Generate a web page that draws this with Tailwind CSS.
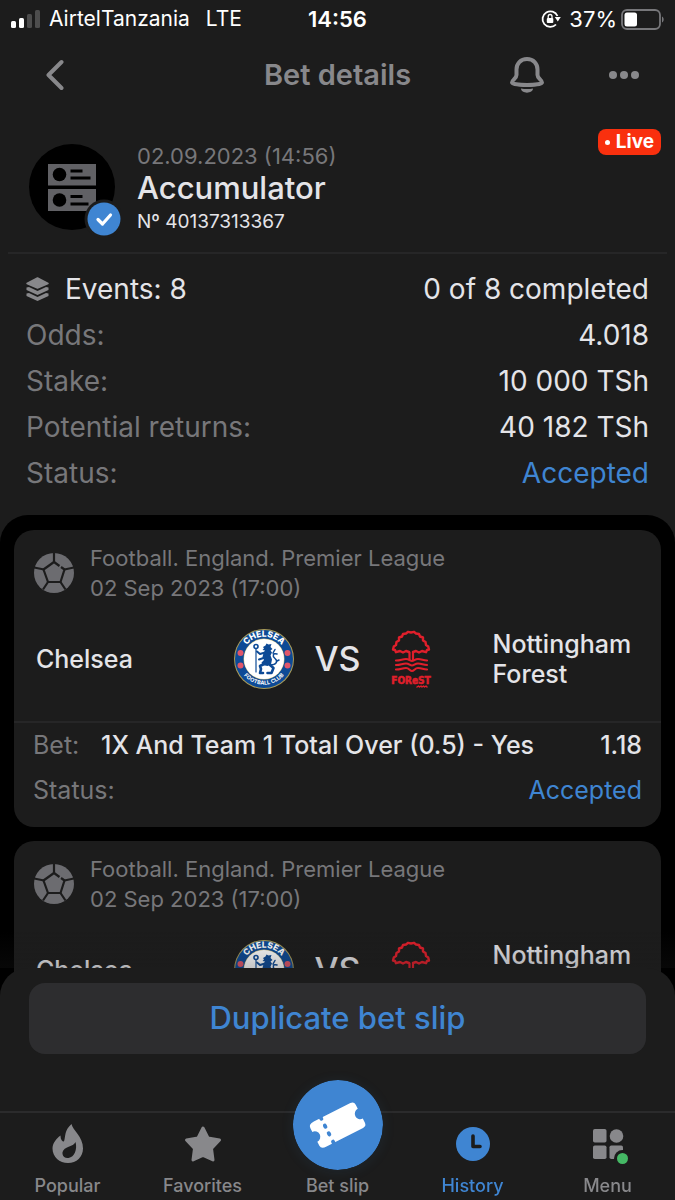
<!DOCTYPE html>
<html lang="en">
<head>
    <meta charset="UTF-8">
    <meta name="viewport" content="width=device-width, initial-scale=1.0">
    <title>Bet details</title>
    <script src="https://cdn.jsdelivr.net/npm/@tailwindcss/browser@4"></script>
</head>
<body class="min-h-screen bg-[#1c1c1c] font-['Inter',sans-serif] text-[#e4e4e8]">

    <!-- Shared icons -->
    <svg class="hidden" aria-hidden="true">
        <symbol id="football" viewBox="0 0 40 40">
            <circle cx="20" cy="20" r="20" fill="#6c6c70"/>
            <g fill="none" stroke="#1c1c1c" stroke-width="2.2" stroke-linejoin="round">
                <path d="M25.500 13L20 9 9.500 16.500 14 29h12.500l4-12.500-3.500-2.500"/>
                <path d="M20 0v9M0 14.500l10 2M40 14.500l-9.500 2M14 29l-5 7.500M26.500 29l5 7.500"/>
            </g>
        </symbol>
        <symbol id="chelsea" viewBox="0 0 60 60">
            <circle cx="30" cy="30" r="30" fill="#a99c5a"/>
            <circle cx="30" cy="30" r="29" fill="#0d4a96"/>
            <circle cx="30" cy="30" r="20.500" fill="#c9bd7c"/>
            <circle cx="30" cy="30" r="20" fill="#fff"/>
            <g fill="#e0566a">
                <circle cx="6.500" cy="24" r="3"/><circle cx="6.500" cy="36.500" r="3"/>
                <circle cx="53.500" cy="24" r="3"/><circle cx="53.500" cy="36.500" r="3"/>
            </g>
            <path id="arc-top" d="M8.500 25A22 22 0 0 1 51.500 25" fill="none"/>
            <path id="arc-bottom" d="M5 38A26.500 26.500 0 0 0 55 38" fill="none"/>
            <text fill="#fff" font-family="Inter, sans-serif" font-size="8.500" font-weight="800" text-anchor="middle"><textPath href="#arc-top" startOffset="50%">CHELSEA</textPath></text>
            <text fill="#fff" font-family="Inter, sans-serif" font-size="5.500" font-weight="700" text-anchor="middle"><textPath href="#arc-bottom" startOffset="50%">FOOTBALL CLUB</textPath></text>
            <g fill="none" stroke="#0d4a96" stroke-linecap="round" stroke-linejoin="round">
                <circle cx="22" cy="17.500" r="2" stroke-width="1.600"/>
                <path d="M22 20v23" stroke-width="1.200"/>
                <path d="M31 23.500l-5 1.500-3-2.500M31 28.500l-6 2" stroke-width="2"/>
                <path d="M30 35l-4 2 1 3-1 4h3M36 36l3.500 3-2 5h-4" stroke-width="2.600"/>
                <path d="M36 36c7 0 8-4 5-6.500s-2-6 2-4.500M39 24l2-3.500M43 32l2-1" stroke-width="1.500"/>
            </g>
            <path d="M29 18l2.500-1.500 1-2 2 1 3-.5-1 3 2 2-2 1.500 1.500 2-1.500 3 1.500 4-1 5-3.500 1.500-5-1-1-2.500 2.500-2.500-1.500-3 1-4 1.500-2.500-2.500-.5 1.500-1.500z" fill="#0d4a96"/>
        </symbol>
        <symbol id="forest" viewBox="-10 0 60 60">
            <g fill="none" stroke="#e01f2b" stroke-width="2.400" stroke-linecap="round" stroke-linejoin="round">
                <path d="M18 23l-3-1-3 1.500-3-1.500-4 1.200-1-2.200-2-.5.800-3 2.200-1.500.5-3 2.500-1.500 0-3 3-1 1-2.500 3-.5 2-1.700 3 .7 3-.7 2 1.700 3 .5 1 2.500 3 1 0 3 2.500 1.500.5 3 2.200 1.500.8 3-2 .5-1 2.200-4-1.200-3 1.500-3-1.500-3 1"/>
                <path d="M18.500 23.500v7M22 23.500v7" stroke-width="2.200"/>
                <path d="M5 31.500c5 0 6-1.500 10-1.500 3 0 4 2 6 2s3-2 6-2c4 0 5 1.500 9 1.500M5 36c5 0 6-1.500 10-1.500 3 0 4 2 6 2s3-2 6-2c4 0 5 1.500 9 1.500M5 40.500c5 0 6-1.500 10-1.500 3 0 4 3 6 3s3-3 6-3c4 0 5 1.500 9 1.500" stroke-width="2.200"/>
                <path d="M26 58l1.500-1 1 1 1.500-1 1 1 1.500-1 1 1 1.500-1 1 1" stroke-width="1.500"/>
            </g>
            <text x="20" y="55" fill="#e01f2b" stroke="#e01f2b" stroke-width=".5" font-family="Liberation Sans Narrow, DejaVu Sans Condensed, sans-serif" font-size="10" font-weight="700" text-anchor="middle">FOReST</text>
        </symbol>
    </svg>

    <!-- Status bar -->
    <div class="grid h-[38px] grid-cols-[1fr_auto_1fr] items-center px-[11px] text-[21px] text-white">
        <div class="flex items-center">
            <svg class="mr-2 h-5 w-[30px]" viewBox="0 0 30 20">
                <g fill="#fff"><rect y="12" width="5" height="7" rx="1.500"/><rect x="8" y="9" width="5" height="10" rx="1.500"/></g>
                <g fill="#4d4d4d"><rect x="16" y="5" width="5" height="14" rx="1.500"/><rect x="24" y="1" width="5" height="18" rx="1.500"/></g>
            </svg>
            <span class="mr-4">AirtelTanzania</span>
            <span>LTE</span>
        </div>
        <div class="text-[22px] font-semibold">14:56</div>
        <div class="flex items-center justify-end">
            <svg class="mr-2 size-5" viewBox="0 0 20 20">
                <path d="M16.500 7A7.800 7.800 0 1 0 15 15.500" fill="none" stroke="#fff" stroke-width="1.800"/>
                <path d="M13.800 8h6l-3 4.500z" fill="#fff"/>
                <rect x="5.800" y="9" width="6.500" height="5" rx="1" fill="#fff"/>
                <path d="M7.200 9V7.400a1.900 1.900 0 0 1 3.800 0V9" fill="none" stroke="#fff" stroke-width="1.300"/>
            </svg>
            <span class="mr-1 text-[22px]">37%</span>
            <svg class="h-[22px] w-[43px]" viewBox="0 0 43 22">
                <rect x="1" y="2" width="38" height="19" rx="5" fill="none" stroke="#77777a" stroke-width="1.800"/>
                <rect x="3.500" y="4.500" width="12.500" height="14" rx="2.500" fill="#fff"/>
                <path d="M41 8.500c2.200 1 2.200 5 0 6z" fill="#77777a"/>
            </svg>
        </div>
    </div>

    <!-- Page header -->
    <header class="grid h-[74px] grid-cols-[1fr_auto_1fr] items-center px-9">
        <button type="button" aria-label="Back" class="justify-self-start px-[10px]">
            <svg class="h-8 w-[18px]" viewBox="0 0 18 32"><path d="M15.500 3L2.500 16l13 13" fill="none" stroke="#88888b" stroke-width="4" stroke-linecap="round" stroke-linejoin="round"/></svg>
        </button>
        <h1 class="text-[29px] font-semibold text-[#88888b]">Bet details</h1>
        <div class="flex items-center justify-end gap-[65px]">
            <button type="button" aria-label="Notifications">
                <svg class="h-9 w-[34px]" viewBox="0 0 34 36">
                    <path d="M17 2C10.500 2 6.500 6.800 6.500 12.500v5.500c0 3.500-4.500 5-4.500 7.500 0 1.500 6.500 2.500 15 2.500s15-1 15-2.500c0-2.500-4.500-4-4.500-7.500v-5.500C27.500 6.800 23.500 2 17 2z" fill="none" stroke="#88888b" stroke-width="4" stroke-linejoin="round"/>
                    <path d="M11 31.500q6 1.200 12 0c0 5.500-12 5.500-12 0z" fill="#88888b"/>
                </svg>
            </button>
            <button type="button" aria-label="More">
                <svg class="h-9 w-[30px]" viewBox="0 0 30 36" fill="#88888b"><circle cx="4" cy="18" r="4"/><circle cx="15" cy="18" r="4"/><circle cx="26" cy="18" r="4"/></svg>
            </button>
        </div>
    </header>

    <main>
        <!-- Bet type -->
        <section class="relative mx-2 flex h-[142px] items-start gap-4 border-b-2 border-[#262627] pt-8 pl-[21px]">
            <svg class="h-[94px] w-[92px] shrink-0" viewBox="0 0 92 94">
                <circle cx="43" cy="43" r="43" fill="#000"/>
                <path d="M19 20h48v21.500H19zM19 45h48v22H19z" fill="#616165"/>
                <g fill="#000"><circle cx="30.500" cy="30.500" r="6.800"/><circle cx="30.500" cy="56" r="6.800"/></g>
                <path d="M41.500 27h12M41.500 34h20M41.500 52.500h12M41.500 60h18" stroke="#000" stroke-width="2.800"/>
                <circle cx="75" cy="75" r="19.500" fill="#1c1c1c"/>
                <circle cx="75" cy="75" r="16.500" fill="#3f85d2"/>
                <path d="M69 75.500l4.500 4.500 8-9" fill="none" stroke="#fff" stroke-width="3.200" stroke-linecap="round" stroke-linejoin="round"/>
            </svg>
            <div>
                <p class="text-[22px] leading-[24px] text-[#77777a]">02.09.2023 (14:56)</p>
                <h2 class="text-[31px] leading-[40px] font-medium">Accumulator</h2>
                <p class="text-[19px] leading-[28px]">Nº 40137313367</p>
            </div>
            <span class="absolute top-[17px] right-[6px] flex h-[26px] items-center gap-[6px] rounded-lg bg-[#f9300e] px-[7px] text-[19px] font-bold text-white">
                <span class="size-[5px] rounded-full bg-white"></span>Live
            </span>
        </section>

        <!-- Summary -->
        <dl class="px-[26px] pt-3 pb-[19px] text-[28px] leading-[46px] text-[#77777a]">
            <div class="flex justify-between">
                <dt class="flex items-center gap-4 text-[#e4e4e8]">
                    <svg class="h-6 w-[23px]" viewBox="0 0 23 24" fill="#88888b">
                        <path d="M11.500 1L22 6.500 11.500 11 1 6.500z" stroke="#88888b" stroke-width="1.500" stroke-linejoin="round"/>
                        <path d="M.5 10.500l2.500-.5 8.500 4 8.500-4 2.500.5v2.500L11.500 18 .5 13zM.5 16.500L3 16l8.500 4 8.500-4 2.500.5V19l-11 5-11-5z"/>
                    </svg>
                    Events: 8
                </dt>
                <dd class="text-[#e4e4e8]">0 of 8 completed</dd>
            </div>
            <div class="flex justify-between"><dt>Odds:</dt><dd class="text-[#e4e4e8]">4.018</dd></div>
            <div class="flex justify-between"><dt>Stake:</dt><dd class="text-[#e4e4e8]">10 000 TSh</dd></div>
            <div class="flex justify-between"><dt>Potential returns:</dt><dd class="text-[#e4e4e8]">40 182 TSh</dd></div>
            <div class="flex justify-between"><dt>Status:</dt><dd class="text-[#3f85d2]">Accepted</dd></div>
        </dl>

        <!-- Events -->
        <section class="flex flex-col gap-[14px] rounded-t-[28px] bg-black px-[14px] pt-[15px] pb-[14px]">
            <article class="rounded-[20px] bg-[#1c1c1c] pt-[13px] pb-[14px]">
                <div class="flex items-center gap-4 px-5 text-[22px] leading-[30px] text-[#77777a]">
                    <svg class="size-10"><use href="#football"/></svg>
                    <p>Football. England. Premier League<br>02 Sep 2023 (17:00)</p>
                </div>
                <div class="mt-[26px] mb-8 grid h-[60px] grid-cols-[1fr_auto_1fr] items-center px-[22px] text-[25px] leading-[30px] font-medium">
                    <p>Chelsea</p>
                    <div class="flex items-center gap-5">
                        <svg class="size-[60px]"><use href="#chelsea"/></svg>
                        <span class="text-[34px] font-medium">VS</span>
                        <svg class="size-[60px]"><use href="#forest"/></svg>
                    </div>
                    <p class="pl-[52px]">Nottingham Forest</p>
                </div>
                <div class="border-t-2 border-[#262627] px-[19px] text-[25px] leading-[45px]">
                    <div class="flex">
                        <span class="w-[68px] text-[#77777a]">Bet:</span>
                        <span class="flex-1 font-medium">1X And Team 1 Total Over (0.5) - Yes</span>
                        <span class="font-medium">1.18</span>
                    </div>
                    <div class="flex justify-between"><span class="text-[#77777a]">Status:</span><span class="text-[#3f85d2]">Accepted</span></div>
                </div>
            </article>
            <article class="rounded-t-[20px] bg-[#1c1c1c] pt-[13px]">
                <div class="flex items-center gap-4 px-5 text-[22px] leading-[30px] text-[#77777a]">
                    <svg class="size-10"><use href="#football"/></svg>
                    <p>Football. England. Premier League<br>02 Sep 2023 (17:00)</p>
                </div>
                <div class="mt-[26px] mb-8 grid h-[60px] grid-cols-[1fr_auto_1fr] items-center px-[22px] text-[25px] leading-[30px] font-medium">
                    <p>Chelsea</p>
                    <div class="flex items-center gap-5">
                        <svg class="size-[60px]"><use href="#chelsea"/></svg>
                        <span class="text-[34px] font-medium">VS</span>
                        <svg class="size-[60px]"><use href="#forest"/></svg>
                    </div>
                    <p class="pl-[52px]">Nottingham Forest</p>
                </div>
            </article>
        </section>
    </main>

    <!-- Bottom panel -->
    <footer class="fixed inset-x-0 bottom-0">
        <div class="h-9 bg-linear-to-b from-[#1c1c1c]/0 to-[#1c1c1c]/25"></div>
        <div class="rounded-t-[28px] bg-[#1c1c1c] pt-[15px]">
            <div class="px-[29px]">
                <button type="button" class="h-[71px] w-full rounded-2xl bg-[#2d2d2f] text-[31px] font-medium text-[#3f85d2]">Duplicate bet slip</button>
            </div>
            <nav class="mt-[57px] grid h-[89px] grid-cols-5 border-t-2 border-[#2b2b2c] text-center text-lg leading-6 font-medium text-[#88888b]">
                <a href="#" class="flex flex-col items-center justify-end gap-[10px] pb-[2px]">
                    <svg class="h-10 w-8" viewBox="0 0 32 40" fill="#88888b">
                        <path fill-rule="evenodd" d="M19.500 0c1 6 11.500 12.500 11.500 24.500C31 33 24.500 39 16 39S.5 33 .5 24.500C.5 19.500 4 15 8.500 11.500c0 4 1.500 6 3.500 6C14 11 12 7 19.500 0zM23.500 18c-2 3.500-5.500 4-8.500 5.500-3.500 1.500-5 4-4.500 6.500.5 3 3 4.500 6 4 6-1 9-8.500 7-16z"/>
                    </svg>
                    Popular
                </a>
                <a href="#" class="flex flex-col items-center justify-end gap-[10px] pb-[2px]">
                    <svg class="size-10" viewBox="0 0 40 40"><path d="M20 4l5 10 11.500 2-8 8.500 1.500 11.500-10-4.500L10 36l1.500-11.500-8-8.500L15 14z" fill="#88888b" stroke="#88888b" stroke-width="3" stroke-linejoin="round"/></svg>
                    Favorites
                </a>
                <a href="#" class="-mt-[34px] flex flex-col items-center justify-end gap-1 pb-[2px]">
                    <svg class="size-[90px] rounded-full shadow-[0_2px_14px_rgb(63_133_210/0.1)]" viewBox="-45 -45 90 90">
                        <circle r="45" fill="#3f85d2"/>
                        <g transform="rotate(-27)">
                            <path d="M-20-14h41q4 0 4 4v4.500a5.500 5.500 0 0 0 0 11v4.500q0 4-4 4h-41q-6 0-6-4v-4.500a5.500 5.500 0 0 0 0-11v-4.500q0-4 6-4z" fill="#fff"/>
                            <path d="M-12-14.500v1.500M-12-5.500v1.500M-12 3v1.500M-12 12.500v1.500" stroke="#3f85d2" stroke-width="3.800" stroke-linecap="round"/>
                        </g>
                    </svg>
                    Bet slip
                </a>
                <a href="#" aria-current="page" class="flex flex-col items-center justify-end gap-[10px] pb-[2px] text-[#3f85d2]">
                    <svg class="size-10" viewBox="0 0 40 40">
                        <circle cx="20" cy="20" r="17" fill="#3f85d2"/>
                        <path d="M20 12v10.500h7" fill="none" stroke="#1c1c1c" stroke-width="3.600" stroke-linecap="round" stroke-linejoin="round"/>
                    </svg>
                    History
                </a>
                <a href="#" class="flex flex-col items-center justify-end gap-[10px] pb-[2px]">
                    <svg class="size-10" viewBox="0 0 40 40" fill="#88888b">
                        <rect x="5" y="5" width="13.500" height="13.500" rx="1.800"/>
                        <circle cx="28.500" cy="12" r="6.800"/>
                        <rect x="5" y="21.500" width="13.500" height="13.500" rx="1.800"/>
                        <rect x="21.500" y="21.500" width="13.500" height="13.500" rx="1.800"/>
                        <circle cx="34.500" cy="34.500" r="8.500" fill="#1c1c1c"/>
                        <circle cx="34.500" cy="34.500" r="5.500" fill="#45b965"/>
                    </svg>
                    Menu
                </a>
            </nav>
        </div>
    </footer>
</body>
</html>
